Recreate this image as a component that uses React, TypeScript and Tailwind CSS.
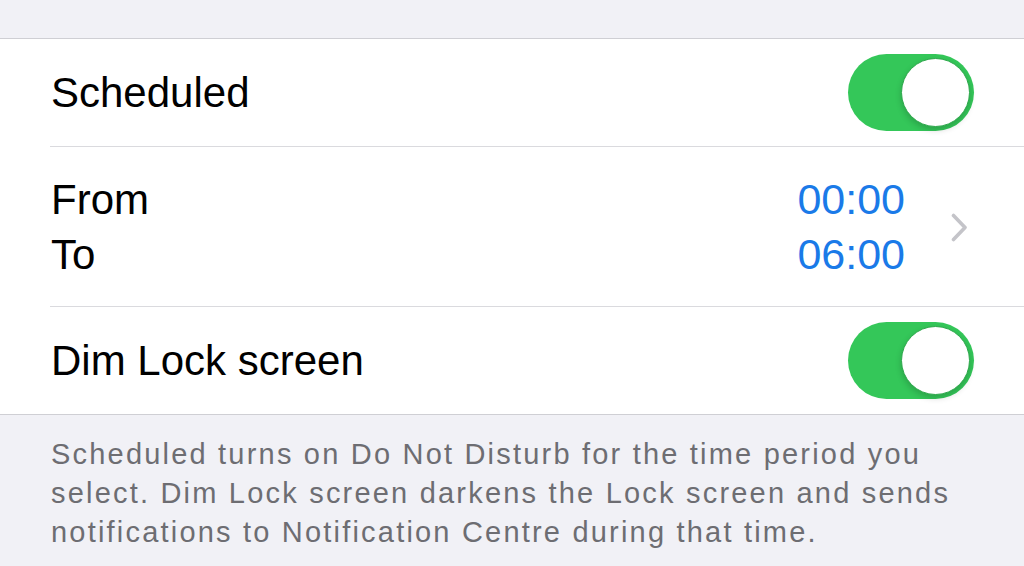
import React from "react";

function Toggle() {
  return (
    <div className="relative flex h-[77px] w-[126px] items-center justify-end rounded-full bg-[#34c759] pr-[4px]">
      <div className="h-[69px] w-[69px] rounded-full border border-[#2ea84c] bg-white shadow-[0_3px_6px_rgba(0,0,0,0.18)]" />
    </div>
  );
}

export default function App() {
  return (
    <div
      className="h-[566px] w-[1024px] overflow-hidden bg-[#f1f1f6] text-black"
      style={{ fontFamily: '"Liberation Sans", Arial, sans-serif' }}
    >
      <div className="h-[38px]" />
      <div className="border-y border-[#cfcfd4] bg-white">
        <div className="flex h-[107px] items-center justify-between pl-[51px] pr-[50px]">
          <span className="text-[42px] leading-none">Scheduled</span>
          <Toggle />
        </div>
        <div className="ml-[50px] h-px bg-[#dadade]" />
        <div className="flex h-[159px] items-center justify-between pl-[51px] pr-[56px]">
          <div className="flex flex-col text-[42px] leading-[55px]">
            <span>From</span>
            <span>To</span>
          </div>
          <div className="flex items-center gap-[46px]">
            <div className="flex flex-col text-right text-[43px] leading-[55px] text-[#1a7ae8]">
              <span>00:00</span>
              <span>06:00</span>
            </div>
            <svg width="17" height="29" viewBox="0 0 17 29" className="mt-[1px]">
              <path d="M2.5 2.5 L14 14.5 L2.5 26.5" fill="none" stroke="#c4c4c9" strokeWidth="3.6" strokeLinecap="round" strokeLinejoin="round" />
            </svg>
          </div>
        </div>
        <div className="ml-[50px] h-px bg-[#dadade]" />
        <div className="flex h-[107px] items-center justify-between pl-[51px] pr-[50px]">
          <span className="text-[42px] leading-none">Dim Lock screen</span>
          <Toggle />
        </div>
      </div>
      <div className="whitespace-nowrap pl-[51px] pt-[20px] text-[29px] leading-[39px] tracking-[2.2px] text-[#6d6d72]">
        <div>Scheduled turns on Do Not Disturb for the time period you</div>
        <div>select. Dim Lock screen darkens the Lock screen and sends</div>
        <div>notifications to Notification Centre during that time.</div>
      </div>
    </div>
  );
}
